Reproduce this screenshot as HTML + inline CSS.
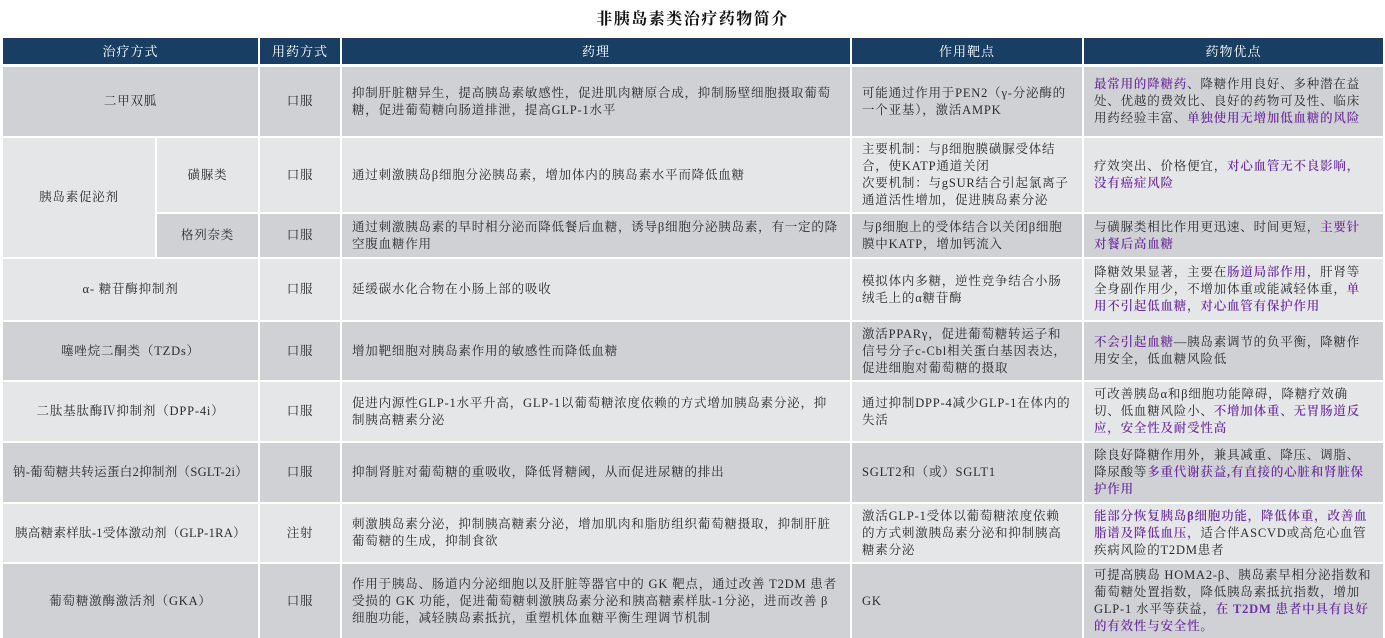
<!DOCTYPE html>
<html><head><meta charset="utf-8"><style>
body{margin:0;width:1385px;height:638px;background:#fff;position:relative;overflow:hidden;font-family:"Liberation Serif","Noto Serif CJK SC",serif;color:#2b2b2b}
.c{position:absolute;display:flex;align-items:center;box-sizing:border-box;font-size:12.5px;line-height:17px;letter-spacing:0.8px}
.m{justify-content:center;text-align:center}
.t{padding:0 10px}
.h{background:#183f63;color:#fff;justify-content:center;font-size:13px;letter-spacing:1px}
.d{background:#cfd1d5}.l{background:#e5e6e8}
.p{color:#7030a0;font-weight:600}
.title{position:absolute;top:6px;left:0;width:1385px;text-align:center;font-size:16px;font-weight:bold;letter-spacing:1.5px;color:#111}
</style></head><body>
<div class="title">非胰岛素类治疗药物简介</div>
<div class="c h" style="left:3px;top:38px;width:255px;height:26px">治疗方式</div>
<div class="c h" style="left:260px;top:38px;width:80px;height:26px">用药方式</div>
<div class="c h" style="left:342px;top:38px;width:508px;height:26px">药理</div>
<div class="c h" style="left:852px;top:38px;width:230px;height:26px">作用靶点</div>
<div class="c h" style="left:1084px;top:38px;width:299px;height:26px">药物优点</div>

<div class="c d m" style="left:3px;top:67px;width:255px;height:69px">二甲双胍</div>
<div class="c d m" style="left:260px;top:67px;width:80px;height:69px">口服</div>
<div class="c d t" style="left:342px;top:67px;width:508px;height:69px">抑制肝脏糖异生，提高胰岛素敏感性，促进肌肉糖原合成，抑制肠壁细胞摄取葡萄糖，促进葡萄糖向肠道排泄，提高GLP-1水平</div>
<div class="c d t" style="left:852px;top:67px;width:230px;height:69px">可能通过作用于PEN2（γ-分泌酶的一个亚基），激活AMPK</div>
<div class="c d t" style="left:1084px;top:67px;width:299px;height:69px"><span><span class="p">最常用的降糖药</span>、降糖作用良好、多种潜在益处、优越的费效比、良好的药物可及性、临床用药经验丰富、<span class="p">单独使用无增加低血糖的风险</span></span></div>

<div class="c l m" style="left:3px;top:138px;width:152px;height:119px">胰岛素促泌剂</div>
<div class="c l m" style="left:157px;top:138px;width:101px;height:74px">磺脲类</div>
<div class="c l m" style="left:260px;top:138px;width:80px;height:74px">口服</div>
<div class="c l t" style="left:342px;top:138px;width:508px;height:74px">通过刺激胰岛β细胞分泌胰岛素，增加体内的胰岛素水平而降低血糖</div>
<div class="c l t" style="left:852px;top:138px;width:230px;height:74px">主要机制：与β细胞膜磺脲受体结合，使KATP通道关闭<br>次要机制：与gSUR结合引起氯离子通道活性增加，促进胰岛素分泌</div>
<div class="c l t" style="left:1084px;top:138px;width:299px;height:74px"><span>疗效突出、价格便宜，<span class="p">对心血管无不良影响，没有癌症风险</span></span></div>

<div class="c d m" style="left:157px;top:214px;width:101px;height:43px">格列奈类</div>
<div class="c d m" style="left:260px;top:214px;width:80px;height:43px">口服</div>
<div class="c d t" style="left:342px;top:214px;width:508px;height:43px">通过刺激胰岛素的早时相分泌而降低餐后血糖，诱导β细胞分泌胰岛素，有一定的降空腹血糖作用</div>
<div class="c d t" style="left:852px;top:214px;width:230px;height:43px">与β细胞上的受体结合以关闭β细胞膜中KATP，增加钙流入</div>
<div class="c d t" style="left:1084px;top:214px;width:299px;height:43px"><span>与磺脲类相比作用更迅速、时间更短，<span class="p">主要针对餐后高血糖</span></span></div>

<div class="c l m" style="left:3px;top:259px;width:255px;height:61px">α- 糖苷酶抑制剂</div>
<div class="c l m" style="left:260px;top:259px;width:80px;height:61px">口服</div>
<div class="c l t" style="left:342px;top:259px;width:508px;height:61px">延缓碳水化合物在小肠上部的吸收</div>
<div class="c l t" style="left:852px;top:259px;width:230px;height:61px">模拟体内多糖，逆性竞争结合小肠绒毛上的α糖苷酶</div>
<div class="c l t" style="left:1084px;top:259px;width:299px;height:61px"><span>降糖效果显著，主要在<span class="p">肠道局部作用</span>，肝肾等全身副作用少，不增加体重或能减轻体重，<span class="p">单用不引起低血糖，对心血管有保护作用</span></span></div>

<div class="c d m" style="left:3px;top:322px;width:255px;height:58px">噻唑烷二酮类（TZDs）</div>
<div class="c d m" style="left:260px;top:322px;width:80px;height:58px">口服</div>
<div class="c d t" style="left:342px;top:322px;width:508px;height:58px">增加靶细胞对胰岛素作用的敏感性而降低血糖</div>
<div class="c d t" style="left:852px;top:322px;width:230px;height:58px">激活PPARγ，促进葡萄糖转运子和信号分子c-Cbl相关蛋白基因表达，促进细胞对葡萄糖的摄取</div>
<div class="c d t" style="left:1084px;top:322px;width:299px;height:58px"><span><span class="p">不会引起血糖</span>—胰岛素调节的负平衡，降糖作用安全，低血糖风险低</span></div>

<div class="c l m" style="left:3px;top:382px;width:255px;height:59px">二肽基肽酶Ⅳ抑制剂（DPP-4i）</div>
<div class="c l m" style="left:260px;top:382px;width:80px;height:59px">口服</div>
<div class="c l t" style="left:342px;top:382px;width:508px;height:59px">促进内源性GLP-1水平升高，GLP-1以葡萄糖浓度依赖的方式增加胰岛素分泌，抑制胰高糖素分泌</div>
<div class="c l t" style="left:852px;top:382px;width:230px;height:59px">通过抑制DPP-4减少GLP-1在体内的失活</div>
<div class="c l t" style="left:1084px;top:382px;width:299px;height:59px"><span>可改善胰岛α和β细胞功能障碍，降糖疗效确切、低血糖风险小、<span class="p">不增加体重、无胃肠道反应，安全性及耐受性高</span></span></div>

<div class="c d m" style="left:3px;top:443px;width:255px;height:59px;letter-spacing:0.3px">钠-葡萄糖共转运蛋白2抑制剂（SGLT-2i）</div>
<div class="c d m" style="left:260px;top:443px;width:80px;height:59px">口服</div>
<div class="c d t" style="left:342px;top:443px;width:508px;height:59px">抑制肾脏对葡萄糖的重吸收，降低肾糖阈，从而促进尿糖的排出</div>
<div class="c d t" style="left:852px;top:443px;width:230px;height:59px">SGLT2和（或）SGLT1</div>
<div class="c d t" style="left:1084px;top:443px;width:299px;height:59px"><span>除良好降糖作用外，兼具减重、降压、调脂、降尿酸等<span class="p">多重代谢获益,有直接的心脏和肾脏保护作用</span></span></div>

<div class="c l m" style="left:3px;top:504px;width:255px;height:58px;letter-spacing:0.3px">胰高糖素样肽-1受体激动剂（GLP-1RA）</div>
<div class="c l m" style="left:260px;top:504px;width:80px;height:58px">注射</div>
<div class="c l t" style="left:342px;top:504px;width:508px;height:58px">刺激胰岛素分泌，抑制胰高糖素分泌，增加肌肉和脂肪组织葡萄糖摄取，抑制肝脏葡萄糖的生成，抑制食欲</div>
<div class="c l t" style="left:852px;top:504px;width:230px;height:58px">激活GLP-1受体以葡萄糖浓度依赖的方式刺激胰岛素分泌和抑制胰高糖素分泌</div>
<div class="c l t" style="left:1084px;top:504px;width:299px;height:58px"><span><span class="p">能部分恢复胰岛β细胞功能，降低体重，改善血脂谱及降低血压，</span>适合伴ASCVD或高危心血管疾病风险的T2DM患者</span></div>

<div class="c d m" style="left:3px;top:564px;width:255px;height:74px">葡萄糖激酶激活剂（GKA）</div>
<div class="c d m" style="left:260px;top:564px;width:80px;height:74px">口服</div>
<div class="c d t" style="left:342px;top:564px;width:508px;height:74px">作用于胰岛、肠道内分泌细胞以及肝脏等器官中的 GK 靶点，通过改善 T2DM 患者受损的 GK 功能，促进葡萄糖刺激胰岛素分泌和胰高糖素样肽-1分泌，进而改善 β细胞功能，减轻胰岛素抵抗，重塑机体血糖平衡生理调节机制</div>
<div class="c d t" style="left:852px;top:564px;width:230px;height:74px">GK</div>
<div class="c d t" style="left:1084px;top:564px;width:299px;height:74px"><span>可提高胰岛 HOMA2-β、胰岛素早相分泌指数和葡萄糖处置指数，降低胰岛素抵抗指数，增加 GLP-1 水平等获益，<span class="p">在 T2DM 患者中具有良好的有效性与安全性</span>。</span></div>
</body></html>
